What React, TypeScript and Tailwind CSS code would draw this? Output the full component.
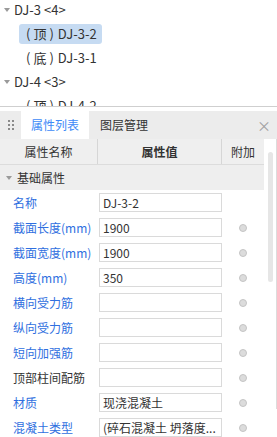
const font = { fontFamily: '"Noto Sans CJK SC", "Noto Sans", sans-serif' };

const rows = [
  { label: "名称", value: "DJ-3-2", blue: true, dot: false },
  { label: "截面长度(mm)", value: "1900", blue: true, dot: true },
  { label: "截面宽度(mm)", value: "1900", blue: true, dot: true },
  { label: "高度(mm)", value: "350", blue: true, dot: true },
  { label: "横向受力筋", value: "", blue: true, dot: true },
  { label: "纵向受力筋", value: "", blue: true, dot: true },
  { label: "短向加强筋", value: "", blue: true, dot: true },
  { label: "顶部柱间配筋", value: "", blue: false, dot: true },
  { label: "材质", value: "现浇混凝土", blue: true, dot: true },
  { label: "混凝土类型", value: "(碎石混凝土 坍落度...", blue: true, dot: true },
];

function Caret() {
  return <span className="inline-block w-0 h-0 border-l-[3px] border-r-[3px] border-t-[4px] border-l-transparent border-r-transparent border-t-[#9a9a9a]" />;
}

function Leaf({ tag, name }: { tag: string; name: string }) {
  return (
    <>
      <span>(</span>
      <span className="mx-[3px]">{tag}</span>
      <span>)</span>
      <span className="ml-[4px]">{name}</span>
    </>
  );
}

export default function App() {
  return (
    <div className="w-[277px] h-[437px] overflow-hidden bg-white text-[12px] text-[#333]" style={font}>
      {/* tree */}
      <div className="h-[106px] overflow-hidden text-[13px]">
        <div className="-mt-[2px]">
          <div className="h-6 flex items-center pl-[4px] gap-[4px]">
            <Caret />
            <span>DJ-3 &lt;4&gt;</span>
          </div>
          <div className="h-6 flex items-center pl-[19px]">
            <span className="bg-[#c6dbf2] rounded-[3px] h-5 flex items-center pl-[7px] pr-[5px]">
              <Leaf tag="顶" name="DJ-3-2" />
            </span>
          </div>
          <div className="h-6 flex items-center pl-[26px]">
            <Leaf tag="底" name="DJ-3-1" />
          </div>
          <div className="h-6 flex items-center pl-[4px] gap-[4px]">
            <Caret />
            <span>DJ-4 &lt;3&gt;</span>
          </div>
          <div className="h-6 flex items-center pl-[26px]">
            <Leaf tag="顶" name="DJ-4-2" />
          </div>
        </div>
      </div>
      <div className="h-[5px] border-t border-[#cfcfcf]" />

      {/* tab bar */}
      <div className="h-[28px] bg-[#ececec] flex items-stretch">
        <div className="w-[21px] flex items-center justify-center">
          <div className="grid grid-cols-2 gap-x-[2px] gap-y-[2px]">
            {[0, 1, 2, 3, 4, 5].map((i) => (
              <span key={i} className="w-[2px] h-[2px] bg-[#8a8a8a]" />
            ))}
          </div>
        </div>
        <div className="w-[68px] bg-white flex items-center justify-center text-[#3d8af7]">属性列表</div>
        <div className="px-[11px] flex items-center">图层管理</div>
        <div className="flex-1" />
        <div className="w-[26px] flex items-center justify-center text-[#a0a0a0] text-[14px]">×</div>
      </div>

      {/* property table */}
      <div className="flex border-r border-[#dcdcdc] h-[270px]">
        <div className="w-[264px]">
          <div className="h-[26px] bg-[#efefef] flex border-b border-[#dcdcdc]">
            <div className="w-[98px] flex items-center justify-center border-r border-[#d6d6d6]">属性名称</div>
            <div className="w-[124px] flex items-center justify-center border-r border-[#d6d6d6] font-bold">属性值</div>
            <div className="flex-1 flex items-center justify-center">附加</div>
          </div>
          <div className="h-[25px] bg-[#eeeeee] flex items-center pl-[6px] gap-[5px]">
            <Caret />
            <span>基础属性</span>
          </div>
          {rows.map((r) => (
            <div key={r.label} className="h-[25px] flex items-center">
              <div className={`w-[99px] pl-[13px] whitespace-nowrap ${r.blue ? "text-[#2f6fe0]" : "text-[#333]"}`}>{r.label}</div>
              <div className="w-[123px] h-[19px] border border-[#dadada] flex items-center px-[3px] whitespace-nowrap overflow-hidden">{r.value}</div>
              <div className="flex-1 flex items-center justify-center">
                {r.dot && <span className="w-[8px] h-[8px] rounded-full bg-[#dcdcdc] border border-[#c4c4c4]" />}
              </div>
            </div>
          ))}
        </div>
        <div className="flex-1 flex justify-center pt-[13px]">
          <div className="w-[5px] h-[130px] rounded-full bg-[#e6e6e6]" />
        </div>
      </div>
    </div>
  );
}
